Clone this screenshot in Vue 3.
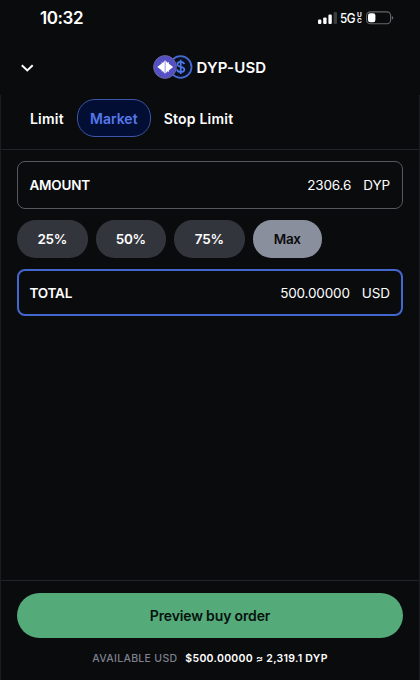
<template>
  <div class="screen">
    <div class="status-bar">
      <span class="time">10:32</span>
      <div class="status-icons">
        <svg class="signal" width="20" height="12" viewBox="0 0 20 12">
          <rect x="0" y="7.6" width="3.4" height="4.4" rx="1.1" fill="#fff" />
          <rect x="5.2" y="5.4" width="3.4" height="6.6" rx="1.1" fill="#fff" />
          <rect x="10.4" y="2.6" width="3.4" height="9.4" rx="1.1" fill="#fff" />
          <rect x="15.6" y="0" width="3.4" height="12" rx="1.1" fill="#3c3d40" />
        </svg>
        <span class="network">5G</span>
        <span class="network-sub"><i>U</i><i>C</i></span>
        <svg class="battery" width="28" height="14" viewBox="0 0 28 14">
          <rect x="0.6" y="0.9" width="24" height="11.8" rx="3.8" fill="none" stroke="#66676a" stroke-width="1.1" />
          <rect x="2" y="2.3" width="7.4" height="9" rx="2.2" fill="#fff" />
          <path d="M25.8 4.9c1.1.5 1.5 1.1 1.5 1.9s-.4 1.4-1.5 1.9z" fill="#66676a" />
        </svg>
      </div>
    </div>

    <header class="header">
      <button class="close">
        <svg width="14" height="10" viewBox="0 0 14 10">
          <path d="M1.8 2.2L7.3 7.4l5.4-5.2" fill="none" stroke="#fff" stroke-width="2" />
        </svg>
      </button>
      <svg class="pair-icon" width="40" height="26" viewBox="0 0 40 26">
        <circle cx="27.6" cy="13" r="10.9" fill="#0a1022" stroke="#446bd2" stroke-width="1.8" />
        <path d="M31.2 10.1c-.4-1.4-1.7-2.2-3.5-2.2-2 0-3.4.9-3.4 2.4 0 3.4 7.1 1.7 7.1 5.2 0 1.6-1.5 2.5-3.6 2.5-2 0-3.5-.9-3.8-2.5M27.7 5.8v14.3" fill="none" stroke="#4d78e8" stroke-width="1.7" />
        <circle cx="12" cy="13" r="11.4" fill="#5550c4" stroke="#686398" stroke-width="1" />
        <path d="M4.3 13l4.4-3.4V8l1.2 1L11.8 6.2v13.6L9.7 17l-1 .8v-1.6zM12.4 6.2l2.1 2.6 1.3-.8v1.8l4.3 3.2-4.3 3.4v1.8l-1.3-1-2.1 2.6z" fill="#fff" />
      </svg>
      <span class="pair">DYP-USD</span>
    </header>

    <main class="sheet">
      <nav class="tabs">
        <button
          v-for="tab in tabs"
          :key="tab"
          class="tab"
          :class="{ active: tab === activeTab }"
          @click="activeTab = tab"
        >{{ tab }}</button>
      </nav>

      <section class="form">
        <div class="field amount">
          <span class="label">AMOUNT</span>
          <span class="value">2306.6</span>
          <span class="unit">DYP</span>
        </div>
        <div class="percents">
          <button
            v-for="p in percents"
            :key="p"
            class="percent"
            :class="{ selected: p === selected }"
            @click="selected = p"
          >{{ p }}</button>
        </div>
        <div class="field total">
          <span class="label">TOTAL</span>
          <span class="value">500.00000</span>
          <span class="unit">USD</span>
        </div>
      </section>

      <footer class="footer">
        <button class="preview">Preview buy order</button>
        <div class="available">
          <span class="available-label">AVAILABLE USD</span>
          <span class="available-value">$500.00000 ≈ 2,319.1 DYP</span>
        </div>
      </footer>
    </main>
  </div>
</template>

<script setup>
  import { ref } from 'vue'
  const tabs = ['Limit', 'Market', 'Stop Limit']
  const activeTab = ref('Market')
  const percents = ['25%', '50%', '75%', 'Max']
  const selected = ref('Max')
</script>

<style>
body {
  margin: 0;
  background: #0a0b0d;
}
</style>

<style scoped>
.screen {
  width: 420px;
  height: 680px;
  display: flex;
  flex-direction: column;
  overflow: hidden;
  background: #0a0b0d;
  color: #fff;
  font-family: Inter, "Liberation Sans", sans-serif;
  font-size: 14px;
  white-space: nowrap;
}
button {
  padding: 0;
  border: none;
  background: none;
  color: inherit;
  font: inherit;
  cursor: pointer;
}
.status-bar {
  height: 36px;
  display: flex;
  justify-content: space-between;
  padding: 0 26px 0 40px;
}
.time {
  font-size: 17px;
  font-weight: 600;
  line-height: 36px;
  letter-spacing: -0.4px;
}
.status-icons {
  display: flex;
  align-items: center;
}
.network {
  width: 16px;
  margin-left: 2px;
  font-size: 13.5px;
  font-weight: 500;
  letter-spacing: -0.5px;
  transform: scaleX(0.87);
  transform-origin: left;
}
.network-sub {
  display: flex;
  flex-direction: column;
  width: 5px;
  margin: 0 4px 0 1px;
  font-size: 6.5px;
  font-weight: 700;
  line-height: 6px;
}
.network-sub i {
  font-style: normal;
}
.header {
  height: 59px;
  box-sizing: border-box;
  display: flex;
  align-items: center;
  padding: 4px 0 0 20px;
}
.close {
  width: 14px;
  height: 10px;
  display: flex;
}
.pair-icon {
  margin: 0 0 1px 119px;
}
.pair {
  margin-left: 3.5px;
  font-size: 15px;
  font-weight: 600;
  letter-spacing: 0.15px;
}
.sheet {
  flex: 1;
  display: flex;
  flex-direction: column;
  border: 1px solid #1b1c1f;
  border-width: 0 1px;
}
.tabs {
  height: 55px;
  display: flex;
  align-items: flex-start;
  box-sizing: border-box;
  padding: 4px 0 0 16px;
  border-bottom: 1px solid #232427;
}
.tab {
  height: 38px;
  box-sizing: border-box;
  padding: 0 12px;
  border: 1px solid transparent;
  border-radius: 18px;
  font-size: 14px;
  font-weight: 600;
  letter-spacing: 0.2px;
}
.tab.active {
  width: 74px;
  border-color: #3d55a8;
  background: #020e33;
  color: #5578ec;
  letter-spacing: 0;
}
.form {
  flex: 1;
  padding: 11px 16px 0;
}
.field {
  height: 48px;
  box-sizing: border-box;
  display: flex;
  align-items: center;
  padding: 0 12px;
  border: 1px solid #57585d;
  border-radius: 8px;
  font-size: 13.5px;
}
.field.total {
  height: 47px;
  padding: 1px 11px 0;
  border: 2px solid #4467cf;
}
.label {
  flex: 1;
  margin-left: -0.5px;
  font-weight: 600;
  letter-spacing: -0.2px;
}
.value {
  letter-spacing: -0.15px;
}
.unit {
  margin-left: 12px;
  letter-spacing: -0.1px;
}
.percents {
  display: flex;
  gap: 8px;
  margin: 11px 0;
}
.percent {
  width: 70.5px;
  height: 38px;
  border-radius: 18.5px;
  background: #33353d;
  font-size: 13.5px;
  font-weight: 600;
  letter-spacing: -0.3px;
}
.percent.selected {
  width: 69.5px;
  background: #8a8f9d;
  color: #0a0b0d;
}
.footer {
  height: 100px;
  box-sizing: border-box;
  padding: 12px 16px 0;
  border-top: 1px solid #232427;
}
.preview {
  display: block;
  width: 100%;
  height: 45px;
  border-radius: 23px;
  background: #55aa7a;
  color: #07130d;
  font-weight: 600;
  letter-spacing: -0.15px;
}
.available {
  display: flex;
  justify-content: center;
  gap: 8px;
  margin-top: 13px;
  font-size: 10.5px;
  line-height: 15px;
}
.available-label {
  color: #7d818e;
  font-weight: 500;
  letter-spacing: 0.3px;
}
.available-value {
  font-weight: 600;
  letter-spacing: 0.3px;
}
</style>
